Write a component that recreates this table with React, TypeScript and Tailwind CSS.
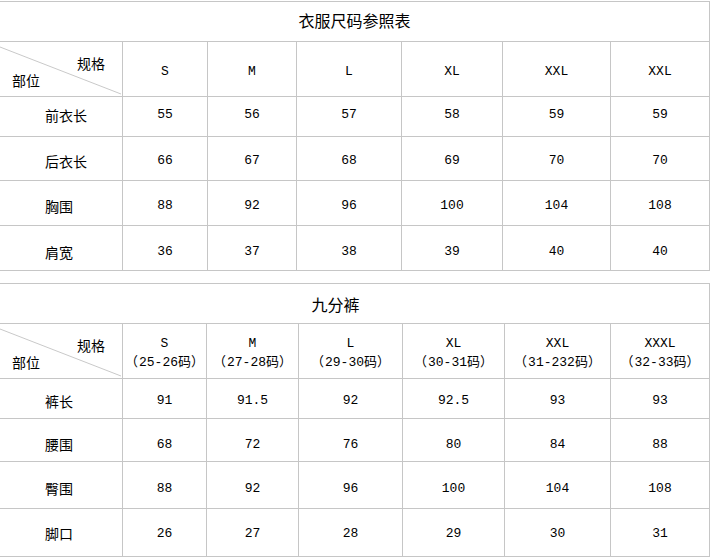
const topCols = [123, 85, 89, 105, 101, 108, 99];
const bottomCols = [123, 84, 92, 104, 102, 106, 99];

const topHead = ["S", "M", "L", "XL", "XXL", "XXL"];
const topRows = [
  { label: "前衣长", h: "h-[40px]", pad: "pb-[3px]", vals: ["55", "56", "57", "58", "59", "59"] },
  { label: "后衣长", h: "h-[44px]", pad: "pt-[5px]", vals: ["66", "67", "68", "69", "70", "70"] },
  { label: "胸围", h: "h-[45px]", pad: "pt-[6px]", vals: ["88", "92", "96", "100", "104", "108"] },
  { label: "肩宽", h: "h-[45px]", pad: "pt-[8px]", vals: ["36", "37", "38", "39", "40", "40"] },
];

const bottomHead = [
  ["S", "25-26码"],
  ["M", "27-28码"],
  ["L", "29-30码"],
  ["XL", "30-31码"],
  ["XXL", "31-232码"],
  ["XXXL", "32-33码"],
];
const bottomRows = [
  { label: "裤长", h: "h-[40px]", pad: "pt-[5px]", vals: ["91", "91.5", "92", "92.5", "93", "93"] },
  { label: "腰围", h: "h-[43px]", pad: "pt-[9px]", vals: ["68", "72", "76", "80", "84", "88"] },
  { label: "臀围", h: "h-[47px]", pad: "pt-[7px]", vals: ["88", "92", "96", "100", "104", "108"] },
  { label: "脚口", h: "h-[48px]", pad: "pt-[2px]", vals: ["26", "27", "28", "29", "30", "31"] },
];

const mono = "font-['Liberation_Mono','Noto_Sans_CJK_SC',monospace]";
const cjk = "font-['Noto_Sans_CJK_SC','Noto_Sans',sans-serif]";
const line = "border-[#c6c6c6]";

function Corner() {
  return (
    <div className={`relative self-stretch w-full flex flex-col pt-[13px] leading-[17px] text-[14px] ${cjk}`}>
      <svg className="absolute inset-0 w-full h-full" viewBox="0 0 122 54" preserveAspectRatio="none">
        <line x1="0" y1="5" x2="121" y2="52" stroke="#c9c9c9" strokeWidth="1" />
      </svg>
      <span className="self-end pr-[17px]">规格</span>
      <span className="self-start pl-3">部位</span>
    </div>
  );
}

function Row({ cols, h, pad = "", children }: any) {
  return (
    <div className={`flex border-b ${line} ${h}`}>
      {children.map((c: any, i: number) => (
        <div
          key={i}
          style={{ width: cols[i] }}
          className={`shrink-0 border-r ${line} flex items-center text-center ${
            i === 0 && pad ? "justify-start pl-[45px]" : "justify-center"
          } ${pad}`}
        >
          {c}
        </div>
      ))}
    </div>
  );
}

export default function App() {
  return (
    <div className="w-[711px] h-[557px] overflow-hidden bg-white text-black pt-px">
      <div className={`w-[710px] border-t ${line}`}>
        <div className={`h-[40px] border-b border-r ${line} flex items-center justify-center pb-[3px] text-[16px] ${cjk}`}>
          衣服尺码参照表
        </div>
        <Row cols={topCols} h="h-[55px]">
          {[
            <Corner key="c" />,
            ...topHead.map((s, i) => (
              <span key={i} className={`text-[13px] mt-[5px] ${mono}`}>
                {s}
              </span>
            )),
          ]}
        </Row>
        {topRows.map((r) => (
          <Row key={r.label} cols={topCols} h={r.h} pad={r.pad}>
            {[
              <span key="l" className={`text-[14px] ${cjk}`}>{r.label}</span>,
              ...r.vals.map((v, i) => (
                <span key={i} className={`text-[13px] ${mono}`}>
                  {v}
                </span>
              )),
            ]}
          </Row>
        ))}
      </div>

      <div className={`w-[710px] mt-[12px] border-t ${line}`}>
        <div className={`h-[40px] border-b border-r ${line} flex items-center justify-center pr-[38px] text-[16px] ${cjk}`}>
          九分裤
        </div>
        <Row cols={bottomCols} h="h-[55px]">
          {[
            <Corner key="c" />,
            ...bottomHead.map(([s, r]) => (
              <div
                key={s}
                className={`flex flex-col items-center pt-[4px] leading-[19px] text-[13px] ${mono}`}
              >
                <span>{s}</span>
                <span className="whitespace-nowrap">
                  <span className="inline-block w-[13px] mr-px">（</span>
                  {r}
                  <span className="inline-block w-[13px]">）</span>
                </span>
              </div>
            )),
          ]}
        </Row>
        {bottomRows.map((r) => (
          <Row key={r.label} cols={bottomCols} h={r.h} pad={r.pad}>
            {[
              <span key="l" className={`text-[14px] ${cjk}`}>{r.label}</span>,
              ...r.vals.map((v, i) => (
                <span key={i} className={`text-[13px] ${mono}`}>
                  {v}
                </span>
              )),
            ]}
          </Row>
        ))}
      </div>
    </div>
  );
}
